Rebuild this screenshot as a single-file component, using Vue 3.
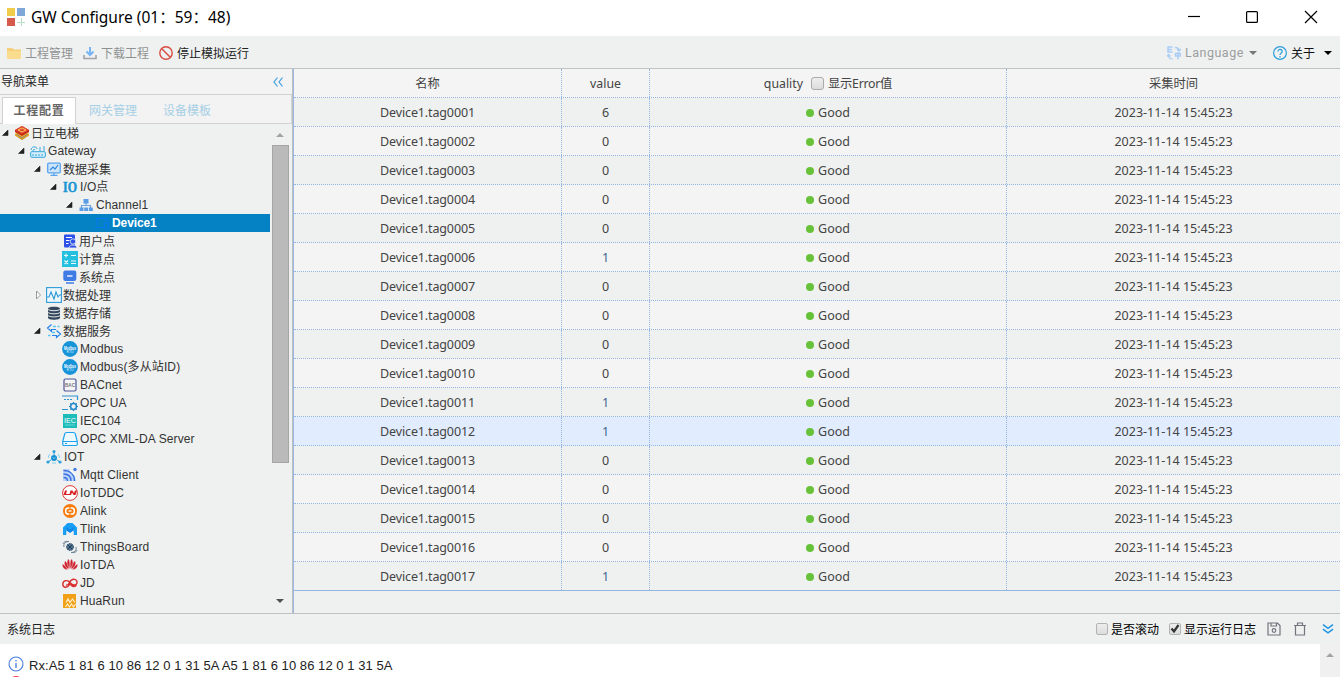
<script setup>
const icons = {
  project: '<path d="M8 6 15 10 8 15 1 10Z" fill="#2f68b8"/><path d="M1 8.5 8 13l7-4.5v2L8 15l-7-4.500Z" fill="#e9a21c"/><path d="M8 3.500 15 8l-7 4.500L1 8Z" fill="#f5b52a"/><path d="M8 1 15 5v2l-7 4-7-4V5Z" fill="#c52b1c"/><path d="M8 1 15 5 8 9 1 5Z" fill="#e0442e"/><path d="M4 5 8 3l4 2-4 2Z" fill="none" stroke="#fbc55a"/>',
  gateway: '<rect x=".7" y="8.700" width="14.600" height="5.600" rx="1" fill="#d8f0fb" stroke="#31a4dc"/><path d="M3 11v2M6 11v2M9 11v2M12 11v2M10 8V4M14 8V3M1 7c0-4 6-4 6-1M3 8c0-2 2-2 2-1" fill="none" stroke="#31a4dc"/>',
  collect: '<rect x="1.700" y="2.200" width="12.600" height="9.600" rx="1" fill="#cde5fb" stroke="#5aa3ee" stroke-width="1.300"/><path d="m4 9 3-3 2 2 3-4" fill="none" stroke="#3186e2" stroke-width="1.200"/><path d="M8 12v2M4.500 14.300h7" stroke="#5aa3ee" stroke-width="1.300"/>',
  io: '<text x="1" y="13" textLength="14" lengthAdjust="spacingAndGlyphs" font-family="Liberation Serif, serif" font-size="15" font-weight="bold" fill="#1c95d4" stroke="#1c95d4" stroke-width=".5">IO</text>',
  channel: '<path d="M8 6v3M3.500 11V8.500h9V11" fill="none" stroke="#6aa3e2" stroke-width="1.200"/><path d="M5.500 2h5v4.500h-5ZM1.500 10.500h4V14h-4ZM6.200 10.500h3.800V14H6.200ZM10.800 10.500h4V14h-4Z" fill="#5a9ee6"/>',
  device: '<path d="M3 10.500V3.500h10.500v3M1 12.500h9M10.500 7.500h4v6h-4Z" fill="none" stroke="#087bf0" stroke-width="1.100"/>',
  user: '<rect x="2" y="1.500" width="11" height="13" rx="1" fill="#2d50e8"/><path d="M4 4.500h6M4 7.500h3.500M4 10.500h2.500" stroke="#fff" stroke-width="1.200"/><circle cx="11" cy="8.500" r="2.700" fill="#2d50e8" stroke="#eef1f1" stroke-width=".8"/><path d="M7 15c0-4 8-4 8 0Z" fill="#2d50e8" stroke="#eef1f1" stroke-width=".8"/>',
  calc: '<path d="M0 0h16v16H0Z" fill="#25c0df"/><path d="M2 4.500h4M4 2.500v4M9 4.500h5M2.500 9.500l3.500 3.500M6 9.500 2.500 13M9 10h5M9 12.500h5" stroke="#e8fbff" stroke-width="1.100"/>',
  system: '<rect x="1.300" y="1.500" width="13" height="10.500" rx="2" fill="#3e7be4"/><path d="M5 7h5.500" stroke="#fff" stroke-width="1.300"/><path d="M4 14h8" stroke="#3e7be4" stroke-width="1.500"/>',
  process: '<rect x=".600" y=".600" width="14.800" height="14.800" fill="#eef7fc" stroke="#2b9bd8" stroke-width="1.100"/><path d="M1 10h2L5 5l3 7 2-7 2 5 1.500-2H15" fill="none" stroke="#2b9bd8" stroke-width="1.100"/>',
  storage: '<path d="M2 3.800C2 1.200 14 1.200 14 3.800v9c0 2.600-12 2.600-12 0Z" fill="#34475c"/><path d="M2 4.200c1 2 11 2 12 0M2 7.300c1 2 11 2 12 0M2 10.400c1 2 11 2 12 0" fill="none" stroke="#e4e8ea"/>',
  service: '<path d="M5.500 1.500 1.500 5l4 3.500V6.500H10M10.500 7.500l4 3.500-4 3.500v-2H6" fill="none" stroke="#2583e8" stroke-width="1.200"/><path d="M7 3.500h3M11.500 3.500h2M6 9.500h3M2 12.500h2.500" fill="none" stroke="#58c8f0" stroke-width="1.300"/>',
  modbus: '<circle cx="8" cy="8" r="7.900" fill="#1793d8"/><text x="2" y="8.500" textLength="12" lengthAdjust="spacingAndGlyphs" font-size="4.500" font-weight="bold" fill="#fff">Modbus</text><text x="4.500" y="12" textLength="7" lengthAdjust="spacingAndGlyphs" font-size="3" fill="#d5effc">RTU</text>',
  bac: '<rect x="2" y="2" width="12" height="12" rx="1.500" fill="#f5f5f8" stroke="#4d5697" stroke-width="1.200"/><text x="3" y="9.600" textLength="10" lengthAdjust="spacingAndGlyphs" font-size="5" font-weight="bold" fill="#777">BAC</text>',
  opcua: '<path d="M0 1h15.500v4M0 14.500h6M2 4.500h2m1 0h2m1 0h2" fill="none" stroke="#3192cf" stroke-width="1.200"/><circle cx="11.500" cy="11.500" r="2.900" fill="none" stroke="#2389cc" stroke-width="1.500"/><path d="M11.500 7v2m0 5v2M7 11.500h2m5 0h2M8.300 8.300l1.300 1.300m3.800 3.800 1.300 1.300M14.700 8.300l-1.300 1.300m-3.800 3.800-1.300 1.300" stroke="#2389cc" stroke-width="1.200"/>',
  iec: '<path d="M1 1h14v14H1Z" fill="#1dbcb9"/><text x="2" y="9.500" textLength="12" lengthAdjust="spacingAndGlyphs" font-size="7" fill="#fff">IEC</text><path d="M3 12h10" stroke="#6ad6d2"/>',
  xml: '<path d="M4.500 1.500h7c1 0 1.500.5 1.800 1.500l2 7.500V13c0 1-.5 1.500-1.300 1.500H2C1.200 14.500.7 14 .7 13v-2.500L2.700 3c.3-1 .8-1.500 1.800-1.500Z" fill="#edf9ff" stroke="#1fa2ee" stroke-width="1.200"/><path d="M1 10.500h14M3 12.500h2" stroke="#1fa2ee" stroke-width="1.100"/>',
  iot: '<circle cx="8" cy="9" r="3" fill="#1790d3"/><path d="M8 6V2M5 11l-3 2M11 11l3 2" stroke="#2a9fdb"/><circle cx="8" cy="2.500" r="1.500" fill="#2a9fdb"/><circle cx="2" cy="13" r="1.600" fill="#2a9fdb"/><circle cx="14" cy="13" r="1.600" fill="#2a9fdb"/><path d="M4 5c-1 1-2 3-1 4M12 5c1 1 2 3 1 4M6 14h4M6.500 8.500 8 9.500l1.500-1" fill="none" stroke="#7acdf0"/>',
  mqtt: '<path d="M1 2h5c4 1 7 5 8 12H1Z" fill="#b9d3fa"/><path d="M1.500 3.500c7 0 11 4 11 10.500M1.500 7c4.500 0 7.500 2.500 7.500 7M1.500 10.500c2.500 0 4 1 4 3.500" fill="none" stroke="#3e73dd" stroke-width="1.400"/><path d="m8 3 5 5" stroke="#fff" stroke-width="1.200"/><circle cx="13" cy="2.500" r="1.700" fill="#4577dd"/>',
  ddc: '<circle cx="8" cy="8" r="7.400" fill="#fff" stroke="#dc3434"/><path d="M1.500 10 3 5.500H5L4 9h3.500l1-3.500h2L12 8l1-2.500h2L13.500 10h-2L10 7.500 9 10Z" fill="#d71f25"/>',
  alink: '<circle cx="8" cy="8" r="7" fill="#f57b0d"/><rect x="3.700" y="5" width="8.600" height="6" rx="2.600" fill="none" stroke="#fff" stroke-width="1.500"/><path d="M6.500 8h3" stroke="#fff" stroke-width="1.300"/><path d="M8 4v2M8 10v2" stroke="#f57b0d" stroke-width="1.200"/>',
  tlink: '<path d="M1 6.500 5.500 2h5L15 6.500V14h-3.500V9H4.500v5H1Z" fill="#189ef4"/><path d="m4.500 6 3.500 3 3.500-3v3.500L8 12 4.500 9.500Z" fill="#0a86ea"/><path d="M4.500 14v-3.500L8 12.500l3.500-2V14Z" fill="#eff1f1"/>',
  things: '<circle cx="8" cy="8" r="3.500" fill="#50748f" stroke="#29445e" stroke-dasharray="1.500 1"/><path d="m6 6 4 4M10 6 6 10" stroke="#233e59"/><path d="M1 5c1-3 4-3 5-2M2 8C1 5 4 2 7 2.500M15 11c-1 3-4 3-5 2M14 8c1 3-2 6-5 5.500" fill="none" stroke="#5d788e" stroke-width=".9"/>',
  iotda: '<path d="M7.500 12C4 8 5 3 6.500 2c1 1 2 5 1 10ZM8.500 12C12 8 11 3 9.500 2c-1 1-2 5-1 10ZM6.500 12.500C2 9 2 6 3 4c2 1 4 5 3.500 8.500ZM9.500 12.500C14 9 14 6 13 4c-2 1-4 5-3.500 8.500ZM5.500 13C1 12 0 9 .5 7c2 1 4 3 5 6ZM10.500 13C15 12 16 9 15.500 7c-2 1-4 3-5 6Z" fill="#cf1e2b" stroke="#eff1f1" stroke-width=".3"/>',
  jd: '<path d="M8 8.500c-2 5-7 4.500-7.200 1C.7 5 6 4.500 8 7.500s6 3.500 7 .5c.7-4-5-5.500-7.500-.5-1 2-2 3-3.500 2.500M8 8c2 5 5.500 4 6.500 1.500" fill="none" stroke="#db3031" stroke-width="1.400"/>',
  huarun: '<path d="M1 1h13v14H1Z" fill="#f2a018"/><path d="m4 9.500 2-3.500 2 3.500L10.500 6l2.500 3.500M3.500 14l2-3 2 3 2-3 2 3 2-3" fill="none" stroke="#fff0cc" stroke-width="1.200"/>',
}
const tree = [
  [0, 'project', '日立电梯', 1], [1, 'gateway', 'Gateway', 1], [2, 'collect', '数据采集', 1], [3, 'io', 'I/O点', 1],
  [4, 'channel', 'Channel1', 1], [5, 'device', 'Device1', 0], [3, 'user', '用户点', 0], [3, 'calc', '计算点', 0],
  [3, 'system', '系统点', 0], [2, 'process', '数据处理', 2], [2, 'storage', '数据存储', 0], [2, 'service', '数据服务', 1],
  [3, 'modbus', 'Modbus', 0], [3, 'modbus', 'Modbus(多从站ID)', 0], [3, 'bac', 'BACnet', 0], [3, 'opcua', 'OPC UA', 0],
  [3, 'iec', 'IEC104', 0], [3, 'xml', 'OPC XML-DA Server', 0], [2, 'iot', 'IOT', 1], [3, 'mqtt', 'Mqtt Client', 0],
  [3, 'ddc', 'IoTDDC', 0], [3, 'alink', 'Alink', 0], [3, 'tlink', 'Tlink', 0], [3, 'things', 'ThingsBoard', 0],
  [3, 'iotda', 'IoTDA', 0], [3, 'jd', 'JD', 0], [3, 'huarun', 'HuaRun', 0],
].map(([level, icon, label, state]) => ({ level, icon, label, state, cjk: label.charCodeAt(0) > 255 }))
const rows = [6, 0, 0, 0, 0, 1, 0, 0, 0, 0, 1, 1, 0, 0, 0, 0, 1].map((value, i) => ({
  name: 'Device1.tag' + String(i + 1).padStart(4, '0'), value,
}))
</script>

<template>
  <div class="app">
    <header class="titlebar">
      <svg class="logo" width="19" height="19"><path d="M0 0h8v8H0Z" fill="#f0cd4c"/><path d="M10 0h8v8h-8Z" fill="#7fa8d9"/><path d="M0 10h8v8H0Z" fill="#d75b4b"/><path d="M14.500 10v8M10 14.500h8" stroke="#b9dfc4"/></svg>
      <span class="title">GW Configure (01：59：48)</span>
      <svg class="winctl" width="132" height="20"><path d="M0 9.500h12" stroke="#000" stroke-width="1.200"/><rect x="58.600" y="4.600" width="10.800" height="10.800" rx="1" fill="none" stroke="#000" stroke-width="1.200"/><path d="m117 4 12 12m0-12-12 12" stroke="#000" stroke-width="1.200"/></svg>
    </header>

    <div class="toolbar">
      <svg class="i-folder" width="14" height="12"><path d="M0 1h5l2 1.500h7V12H0Z" fill="#f5ce78"/><path d="M0 4h14v8H0Z" fill="#f9dc8e"/></svg>
      <span class="tool dim t1">工程管理</span>
      <svg class="i-down" width="14" height="14"><path d="M7 1v7M3.500 5.500 7 9l3.500-3.500" fill="none" stroke="#77b5f5" stroke-width="2"/><path d="M1 9v3.500h12V9" fill="none" stroke="#a0a4a8" stroke-width="1.600"/></svg>
      <span class="tool dim t2">下载工程</span>
      <svg class="i-stop" width="14" height="14"><circle cx="7" cy="7" r="6.200" fill="none" stroke="#d84b40" stroke-width="1.400"/><path d="m3 3 8 8" stroke="#d84b40" stroke-width="1.400"/></svg>
      <span class="tool t3">停止模拟运行</span>
      <div class="right-tools">
        <svg width="14" height="14"><path d="M5.500 1H1v5h4.500M1 3.500h4M8.500 7.500V10h5V7.500ZM11 6v7.500" fill="none" stroke="#a9cdf5" stroke-width="1.500"/><path d="M8 1.500c3 0 4 1 4 3m-2-1.500 2 2 2-2M1.500 9c0 3 1.500 4 4 4M0 10.500l1.500-2 2 2" fill="none" stroke="#a9cdf5" stroke-width="1.300"/></svg>
        <span class="lang">Language</span>
        <svg class="a1" width="8" height="4"><path d="M0 0h8L4 4Z" fill="#777"/></svg>
        <svg class="help" width="14" height="14"><circle cx="7" cy="7" r="6.400" fill="none" stroke="#2d9fdb" stroke-width="1.200"/><path d="M5 5.500c0-3 4.200-2.500 4.200 0C9.200 7 7 7 7 9M7 10v1.400" fill="none" stroke="#2d9fdb" stroke-width="1.200"/></svg>
        <span class="tool about">关于</span>
        <svg class="a2" width="8" height="4"><path d="M0 0h8L4 4Z" fill="#000"/></svg>
      </div>
    </div>

    <main>
      <aside>
        <div class="navhead">
          <span>导航菜单</span>
          <svg width="10" height="10"><path d="M4.500.5 1 5l3.500 4.500M9.500.5 6 5l3.500 4.500" fill="none" stroke="#3f9fe0" stroke-width="1.200"/></svg>
        </div>
        <nav class="tabs">
          <span class="tab on">工程配置</span><span class="tab">网关管理</span><span class="tab">设备模板</span>
        </nav>
        <div class="treewrap">
          <div class="tree">
            <div v-for="n in tree" :key="n.label" class="node" :class="{ sel: n.icon === 'device' }" :style="{ paddingLeft: n.level * 16 + 'px' }">
              <svg class="exp" width="14" height="16"><path v-if="n.state === 1" d="M8 5v5.500H2.500Z" fill="#222" stroke="#222" stroke-width=".6"/><path v-else-if="n.state === 2" d="M4.500 4v8l4-4Z" fill="#fff" stroke="#999"/></svg>
              <svg class="ico" width="16" height="16" v-html="icons[n.icon]"></svg>
              <span class="label" :class="{ cjk: n.cjk }">{{ n.label }}</span>
            </div>
          </div>
          <div class="scroll">
            <svg width="18" height="21"><path d="M4 13h8L8 9Z" fill="#a3a3a3"/></svg>
            <div class="thumb"></div>
            <svg class="dn" width="18" height="21"><path d="M4 9h8l-4 4Z" fill="#505050"/></svg>
          </div>
        </div>
      </aside>

      <section class="grid">
        <div class="row head">
          <div class="cell">名称</div><div class="cell">value</div>
          <div class="cell"><span>quality</span><i class="check big"></i><span class="err">显示Error值</span></div>
          <div class="cell">采集时间</div>
        </div>
        <div v-for="(r, i) in rows" :key="r.name" class="row" :class="{ alt: i % 2, hot: i === 11 }">
          <div class="cell name">{{ r.name }}</div><div class="cell" :class="{ one: r.value === 1 }">{{ r.value }}</div>
          <div class="cell"><i class="dot"></i><span>Good</span></div>
          <div class="cell time">2023-11-14 15:45:23</div>
        </div>
      </section>
    </main>

    <div class="loghead">
      <span class="logtitle">系统日志</span>
      <i class="check"></i><span class="c1">是否滚动</span>
      <i class="check"><svg width="12" height="12"><path d="m2.500 5.500 2.500 3L9.500 2" fill="none" stroke="#333" stroke-width="2.200"/></svg></i><span class="c2">显示运行日志</span>
      <svg class="save" width="14" height="14"><path d="M1 1h9.500L13 3.500V13H1ZM4 1v3h5.500V1" fill="none" stroke="#71747d" stroke-width="1.200"/><circle cx="7" cy="8.500" r="1.800" fill="none" stroke="#71747d" stroke-width="1.200"/></svg>
      <svg class="trash" width="14" height="14"><path d="M1 3.500h12M4.500 3.500V1h5v2.500M2.500 3.500V13h9V3.500" fill="none" stroke="#71747d" stroke-width="1.200"/></svg>
      <svg class="fold" width="12" height="10"><path d="m1 .7 5 3.600L11 .7M1 5.200l5 3.600 5-3.600" fill="none" stroke="#1b94e2" stroke-width="1.500"/></svg>
    </div>
    <div class="log">
      <div class="lines">
        <div class="line"><svg width="16" height="16"><circle cx="8" cy="8" r="7" fill="none" stroke="#477ce0" stroke-width="1.100"/><path d="M8 4v1.500M8 7v5" stroke="#477ce0" stroke-width="1.300"/></svg><span>Rx:A5 1 81 6 10 86 12 0 1 31 5A A5 1 81 6 10 86 12 0 1 31 5A</span></div>
        <div class="line"><svg width="16" height="16"><circle cx="8" cy="7.500" r="7.500" fill="#f0383e"/></svg></div>
      </div>
      <div class="logscroll"><svg width="8" height="4"><path d="M0 4h8L4 0Z" fill="#a3a3a3"/></svg></div>
    </div>
  </div>
</template>

<style>
body { margin: 0; overflow: hidden; }
</style>
<style scoped>
.app { width: 1340px; height: 677px; display: flex; flex-direction: column; overflow: hidden; background: #eff1f1; color: #222; font: 12px/18px "Liberation Sans", "Noto Sans CJK SC", sans-serif; }
.app * { box-sizing: border-box; }
svg { display: block; flex: none; }
.ico { overflow: visible; }
span { white-space: nowrap; }
.titlebar { height: 36px; flex: none; background: #fff; display: flex; align-items: center; padding-left: 7px; }
.logo { margin-right: 5px; margin-top: -1px; }
.title { font: 15.500px/24px "Noto Sans", "Noto Sans CJK SC", sans-serif; color: #000; margin-top: -2px; }
.winctl { margin-left: auto; margin-right: 20px; margin-top: -2px; }
.toolbar { height: 33px; flex: none; border-bottom: 1px solid #bfc2c2; display: flex; align-items: center; padding-left: 7px; padding-top: 1px; }
.tool { padding-top: 2px; }
.dim { color: #8f9292; }
.t1, .t2 { margin-left: 4px; margin-right: 10px; }
.t3 { margin-left: 4px; }
.right-tools { margin-left: auto; display: flex; align-items: center; padding-right: 8px; }
.lang { font: 12.500px/18px Roboto, sans-serif; letter-spacing: .5px; color: #9b9e9e; margin-left: 4px; width: 61px; }
.a1 { margin-left: 3px; margin-right: 16px; }
.about { margin-left: 4px; color: #111; }
.a2 { margin-left: 9px; }
main { display: flex; flex: none; height: 545px; border-bottom: 1px solid #bfc2c2; }
aside { width: 293px; flex: none; border-right: 1px solid #bcc0c0; display: flex; flex-direction: column; }
.navhead { height: 26px; flex: none; background: #f3f3f3; border-bottom: 1px solid #d2d2d2; display: flex; align-items: center; justify-content: space-between; padding: 0 9px 0 1px; }
.tabs { height: 29px; flex: none; background: #f3f3f3; border-bottom: 1px solid #d2d2d2; border-right: 1px solid #d2d2d2; display: flex; padding: 2px 0 0 2px; }
.tab { width: 74px; height: 26px; text-align: center; line-height: 29px; color: #a6cfe5; }
.on { height: 27px; width: 74px; background: #fff; border: 1px solid #d2d2d2; border-bottom: 0; color: #666; font-weight: bold; line-height: 27px; letter-spacing: .7px; }
.treewrap { flex: 1; display: flex; min-height: 0; }
.tree { width: 270px; }
.node { height: 18px; display: flex; align-items: center; }
.label { font-size: 12px; letter-spacing: .12px; margin-left: 2px; color: #333; }
.cjk { margin-left: 1px; padding-top: 2px; letter-spacing: 0; }
.sel { background: #0582c4; }
.sel .label { color: #fff; font-weight: bold; letter-spacing: -.1px; }
.scroll { width: 18px; margin-left: 2px; display: flex; flex-direction: column; }
.thumb { width: 17px; height: 318px; background: #bababa; border: 1px solid #a6a6a6; }
.dn { margin-top: auto; margin-bottom: 2px; }
.grid { flex: 1; border-left: 1px solid #9ab8e0; font: 12.500px/18px "Noto Sans", "Noto Sans CJK SC", sans-serif; color: #444; }
.row { height: 29px; display: grid; grid-template-columns: 268px 88px 357px 1fr; border-bottom: 1px dotted #94b6e2; }
.row:last-child { border-bottom: 1px solid #94b6e2; }
.head, .alt { background: #f4f4f4; }
.hot { background: #e2ecff; }
.cell { display: flex; align-items: center; justify-content: center; border-right: 1px dotted #94b6e2; padding-top: 2px; }
.cell:last-child { border-right: 0; }
.name { letter-spacing: -.13px; }
.err { letter-spacing: -.25px; }
.head .cell { font-size: 12.300px; }
.one { color: #3e668f; }
.dot { width: 8px; height: 8px; border-radius: 50%; background: #67c23a; margin-right: 4px; }
.check { width: 12px; height: 12px; flex: none; border: 1px solid #b3b3b3; border-radius: 2px; background: linear-gradient(#eee, #dcdcdc); }
.check svg { margin: -1px; }
.big { width: 13px; height: 13px; margin: -1px 4px 0 8px; border-radius: 3px; border-color: #aaa; }
.loghead { height: 30px; flex: none; display: flex; align-items: center; padding: 0 7px; }
.loghead span { padding-top: 2px; }
.logtitle { margin-right: auto; }
.c1, .c2 { color: #000; margin-left: 3px; }
.c1 { margin-right: 10px; }
.save { margin-left: 11px; }
.trash { margin-left: 12px; }
.fold { margin-left: 15px; margin-right: -1px; }
.log { flex: 1; background: #fff; display: flex; }
.lines { flex: 1; padding: 12px 0 0 8px; }
.line { display: flex; height: 20px; font-size: 13px; }
.line span { margin-left: 5px; line-height: 19px; letter-spacing: .06px; }
.logscroll { width: 20px; background: #f0f0f0; padding: 9px 0 0 6px; }
</style>
